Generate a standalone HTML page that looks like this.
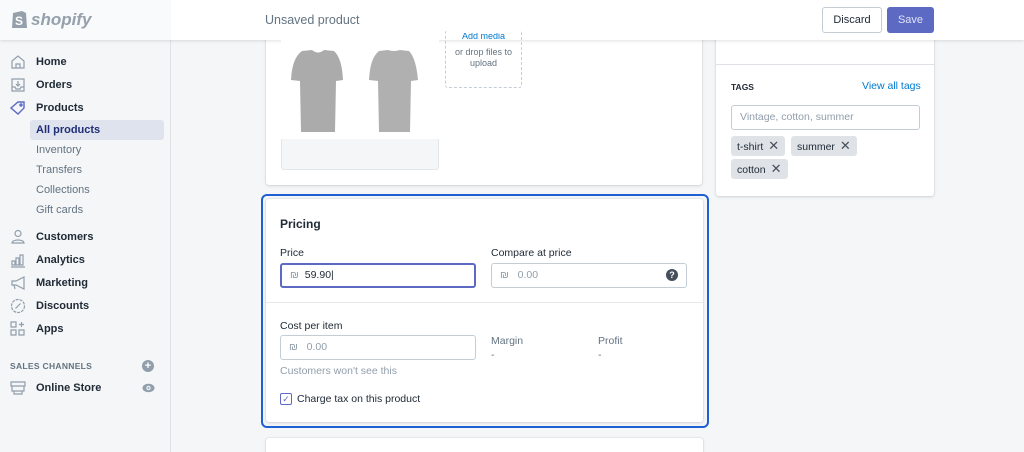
<!DOCTYPE html>
<html><head><meta charset="utf-8"><style>
*{box-sizing:border-box;margin:0;padding:0}
html,body{width:1024px;height:452px;overflow:hidden}
body{background:#f4f6f8;font-family:"Liberation Sans",Arial,sans-serif;color:#212b36;position:relative;font-size:11px}
.abs{position:absolute}
.side{left:0;top:0;width:171px;height:452px;background:#f4f6f8;border-right:1px solid #dfe3e8}
.top{left:0;top:0;width:1024px;height:40px;background:#fff;box-shadow:0 1px 3px rgba(0,0,0,.12)}
.logo{left:0;top:0;width:171px;height:40px;background:#f9fafb}
.nav{left:36px;font-size:11px;color:#212b36;font-weight:bold}
.sub{left:36px;font-size:11px;color:#637381}
.ic{left:10px;width:16px;height:16px}
.card{background:#fff;border-radius:3px;box-shadow:0 0 0 1px rgba(63,63,68,.05),0 1px 3px rgba(63,63,68,.15)}
.inp{background:#fff;border:1px solid #c4cdd5;border-radius:3px;height:25px;font-size:10.5px;color:#919eab;padding-left:8px;line-height:23px}
.lbl{font-size:10.5px;color:#212b36}
.tag{background:#dfe3e8;border-radius:3px;height:20px;line-height:20px;font-size:10.5px;padding:0 6px;color:#212b36}
.x{font-size:13px;color:#454f5b;margin-left:5px}
</style></head><body>
<div class="abs side"></div>
<div class="abs top"></div>
<div class="abs logo"></div>
<svg class="abs" style="left:10px;top:8px" width="20" height="22" viewBox="0 0 20 22"><path d="M3 5 L12 3 L16 5 L17 20 L2 20 Z" fill="#95a0ab"/><text x="5" y="17" font-size="12" font-weight="bold" fill="#fff" font-family="Liberation Sans">S</text></svg>
<div class="abs" style="left:31px;top:10px;font-size:17px;font-weight:bold;font-style:italic;color:#95a0ab">shopify</div>
<div class="abs" style="left:265px;top:13px;font-size:12.5px;color:#637381">Unsaved product</div>
<div class="abs" style="left:822px;top:7px;width:60px;height:26px;border:1px solid #c4cdd5;border-radius:3px;background:#fff;text-align:center;line-height:24px;font-size:11px;color:#212b36">Discard</div>
<div class="abs" style="left:887px;top:7px;width:47px;height:26px;border-radius:3px;background:#5c6ac4;text-align:center;line-height:26px;font-size:11px;color:#dfe3f5">Save</div>

<!-- nav -->
<svg class="abs ic" style="top:54px" viewBox="0 0 16 16" fill="none" stroke="#919eab" stroke-width="1.2"><path d="M2 7 L8 2 L14 7 V14 H2 Z M6 14 V10 H10 V14"/></svg>
<div class="abs nav" style="top:56px">Home</div>
<svg class="abs ic" style="top:77px" viewBox="0 0 16 16" fill="none" stroke="#919eab" stroke-width="1.2"><path d="M2 2 H14 V14 H2 Z M2 10 H5 L6 12 H10 L11 10 H14 M8 4 V9 M6 7 L8 9 L10 7"/></svg>
<div class="abs nav" style="top:79px">Orders</div>
<svg class="abs ic" style="top:100px" viewBox="0 0 16 16" fill="none" stroke="#5c6ac4" stroke-width="1.4"><path d="M1 8 L8 2 H14 V8 L8 14 Z"/><circle cx="11" cy="5" r="1"/></svg>
<div class="abs nav" style="top:102px">Products</div>
<div class="abs" style="left:30px;top:120px;width:134px;height:20px;background:#dfe3ee;border-radius:3px"></div>
<div class="abs nav" style="top:124px;color:#202e78">All products</div>
<div class="abs sub" style="top:144px">Inventory</div>
<div class="abs sub" style="top:164px">Transfers</div>
<div class="abs sub" style="top:184px">Collections</div>
<div class="abs sub" style="top:204px">Gift cards</div>
<svg class="abs ic" style="top:229px" viewBox="0 0 16 16" fill="none" stroke="#919eab" stroke-width="1.2"><circle cx="8" cy="4.5" r="3"/><path d="M2 14 C2 10 14 10 14 14 Z"/></svg>
<div class="abs nav" style="top:231px">Customers</div>
<svg class="abs ic" style="top:252px" viewBox="0 0 16 16" fill="none" stroke="#919eab" stroke-width="1.2"><path d="M1 15 H15 M2 13 V9 H5 V13 Z M6 13 V6 H9 V13 Z M10 13 V3 H13 V13 Z"/></svg>
<div class="abs nav" style="top:254px">Analytics</div>
<svg class="abs ic" style="top:275px" viewBox="0 0 16 16" fill="none" stroke="#919eab" stroke-width="1.2"><path d="M2 6 H6 L14 2 V14 L6 10 H2 Z M4 10 L5 14"/></svg>
<div class="abs nav" style="top:277px">Marketing</div>
<svg class="abs ic" style="top:298px" viewBox="0 0 16 16" fill="none" stroke="#919eab" stroke-width="1.2"><circle cx="8" cy="8" r="6.5" stroke-dasharray="3 1"/><path d="M5.5 10.5 L10.5 5.5"/></svg>
<div class="abs nav" style="top:300px">Discounts</div>
<svg class="abs ic" style="top:321px" viewBox="0 0 16 16" fill="none" stroke="#919eab" stroke-width="1.2"><path d="M1 1 H6 V6 H1 Z M1 9 H6 V14 H1 Z M9 9 H14 V14 H9 Z M11.5 1 V6 M9 3.5 H14"/></svg>
<div class="abs nav" style="top:323px">Apps</div>
<div class="abs" style="left:10px;top:361px;font-size:8.5px;font-weight:bold;color:#637381;letter-spacing:.3px">SALES CHANNELS</div>
<div class="abs" style="left:142px;top:360px;width:12px;height:12px;border-radius:50%;background:#919eab;color:#fff;font-size:11px;line-height:12px;text-align:center;font-weight:bold">+</div>
<svg class="abs ic" style="top:380px" viewBox="0 0 16 16" fill="none" stroke="#919eab" stroke-width="1.2"><path d="M1 2 H15 V6 H1 Z M2 6 V11 H14 V6 M4 11 V14 H12 V11"/></svg>
<div class="abs nav" style="top:382px">Online Store</div>
<svg class="abs" style="left:142px;top:383px" width="13" height="10" viewBox="0 0 13 10"><ellipse cx="6.5" cy="5" rx="6" ry="4.2" fill="#919eab"/><circle cx="6.5" cy="5" r="2.2" fill="#f4f6f8"/><circle cx="6.5" cy="5" r="1" fill="#919eab"/></svg>

<!-- media card -->
<div class="abs card" style="left:266px;top:30px;width:436px;height:155px;z-index:-1"></div>
<div class="abs" style="left:281px;top:38px;width:158px;height:132px;background:#f4f6f8;border-radius:3px;border:1px solid #e3e6e9"></div>
<div class="abs" style="left:281px;top:38px;width:158px;height:101px;background:#fff"></div>
<svg class="abs" style="left:288px;top:50px" width="142" height="84" viewBox="0 0 142 84"><path d="M14 1 L24 0 Q30 5 36 0 L46 1 Q54 8 55 30 L48 31 L47 82 L13 82 L12 31 L3 30 Q4 8 14 1 Z" fill="#ababab"/><path d="M91 1 L100 0 Q106 2 112 0 L121 1 Q128 8 130 30 L123 31 L122 82 L91 82 L90 31 L81 30 Q82 8 91 1 Z" fill="#b0b0b0"/></svg>
<div class="abs" style="left:445px;top:30px;width:77px;height:58px;border:1px dashed #c4cdd5;border-top:none;border-radius:3px"></div>
<div class="abs" style="left:445px;top:47px;width:77px;text-align:center;font-size:9px;color:#637381;line-height:11px">or drop files to upload</div>
<div class="abs" style="left:445px;top:33px;width:77px;text-align:center;font-size:9px;color:#007ace;line-height:7px;overflow:hidden;height:7px">Add media</div>

<!-- right card -->
<div class="abs card" style="left:716px;top:30px;width:218px;height:166px;z-index:-1"></div>
<div class="abs" style="left:716px;top:64px;width:218px;height:1px;background:#dfe3e8"></div>
<div class="abs" style="left:731px;top:82px;font-size:8.5px;font-weight:bold;color:#212b36">TAGS</div>
<div class="abs" style="left:862px;top:80px;font-size:10.5px;color:#007ace">View all tags</div>
<div class="abs inp" style="left:731px;top:105px;width:189px">Vintage, cotton, summer</div>
<div class="abs tag" style="left:731px;top:136px">t-shirt<span class="x">✕</span></div>
<div class="abs tag" style="left:791px;top:136px">summer<span class="x">✕</span></div>
<div class="abs tag" style="left:731px;top:159px">cotton<span class="x">✕</span></div>

<!-- pricing -->
<div class="abs" style="left:261px;top:194px;width:448px;height:234px;border:2px solid #1f5fd6;border-radius:6px"></div>
<div class="abs card" style="left:266px;top:199px;width:437px;height:223px"></div>
<div class="abs" style="left:266px;top:302px;width:437px;height:1px;background:#e6e9ec"></div>
<div class="abs" style="left:280px;top:217px;font-size:12px;font-weight:bold">Pricing</div>
<div class="abs lbl" style="left:280px;top:247px">Price</div>
<div class="abs lbl" style="left:491px;top:247px">Compare at price</div>
<div class="abs inp" style="left:280px;top:263px;width:196px;border:2px solid #5c6ac4;line-height:21px;color:#212b36"><span style="color:#919eab">₪</span>&nbsp; 59.90|</div>
<div class="abs inp" style="left:491px;top:263px;width:196px">₪ &nbsp; 0.00</div>
<div class="abs" style="left:666px;top:269px;width:12px;height:12px;border-radius:50%;background:#454f5b;color:#fff;font-size:9px;font-weight:bold;text-align:center;line-height:12px">?</div>
<div class="abs lbl" style="left:280px;top:320px">Cost per item</div>
<div class="abs inp" style="left:280px;top:335px;width:196px">₪ &nbsp; 0.00</div>
<div class="abs lbl" style="left:491px;top:335px;color:#637381">Margin</div>
<div class="abs lbl" style="left:491px;top:349px;color:#637381">-</div>
<div class="abs lbl" style="left:598px;top:335px;color:#637381">Profit</div>
<div class="abs lbl" style="left:598px;top:349px;color:#637381">-</div>
<div class="abs lbl" style="left:280px;top:365px;color:#919eab">Customers won't see this</div>
<div class="abs" style="left:280px;top:393px;width:12px;height:12px;border:1px solid #5c6ac4;border-radius:2px;color:#5c6ac4;font-size:9px;line-height:10px;text-align:center">✓</div>
<div class="abs lbl" style="left:297px;top:393px">Charge tax on this product</div>
<div class="abs card" style="left:266px;top:438px;width:437px;height:14px;border-radius:3px 3px 0 0"></div>
</body></html>
